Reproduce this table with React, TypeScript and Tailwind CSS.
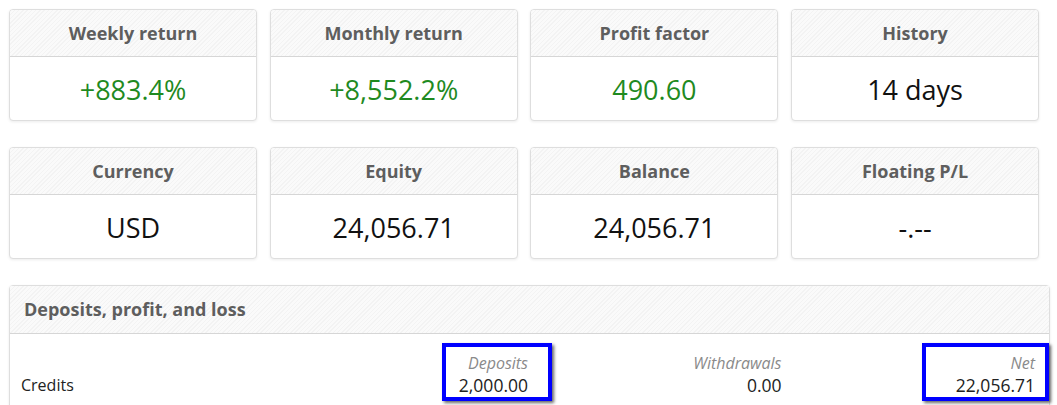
const stats = [
	[
		{ title: "Weekly return", value: "+883.4%", green: true },
		{ title: "Monthly return", value: "+8,552.2%", green: true },
		{ title: "Profit factor", value: "490.60", green: true },
		{ title: "History", value: "14 days", green: false },
	],
	[
		{ title: "Currency", value: "USD", green: false },
		{ title: "Equity", value: "24,056.71", green: false },
		{ title: "Balance", value: "24,056.71", green: false },
		{ title: "Floating P/L", value: "-.--", green: false },
	],
];

const headBg =
	"bg-[repeating-linear-gradient(135deg,#f3f3f3_0px,#f3f3f3_1px,#fafafa_1px,#fafafa_3px)]";

function StatCard({ title, value, green }: { title: string; value: string; green: boolean }) {
	return (
		<div className="w-[248px] rounded-[4px] border border-[#dedede] bg-white shadow-[0_1px_3px_rgba(0,0,0,0.08)] overflow-hidden">
			<div
				className={`h-[47px] flex items-center justify-center border-b border-[#d6d6d6] ${headBg}`}
			>
				<span className="text-[18px] font-bold text-[#5e5e5e]">{title}</span>
			</div>
			<div className="h-[63px] flex items-center justify-center pt-[3px]">
				<span
					className={`text-[27px] ${green ? "text-[#1f8a1f]" : "text-[#111]"}`}
				>
					{value}
				</span>
			</div>
		</div>
	);
}

export default function App() {
	return (
		<div
			className="w-[1057px] h-[405px] overflow-hidden bg-white pl-[9px] pt-[9px]"
			style={{ fontFamily: '"Open Sans", sans-serif' }}
		>
			<div className="flex flex-col gap-[26px]">
				{stats.map((row, i) => (
					<div key={i} className="flex gap-[12.7px]">
						{row.map((s) => (
							<StatCard key={s.title} {...s} />
						))}
					</div>
				))}

				<div className="w-[1041px] rounded-[4px] border border-[#dedede] bg-white shadow-[0_1px_3px_rgba(0,0,0,0.08)]">
					<div className={`h-[48px] flex items-center px-[14px] border-b border-[#d6d6d6] ${headBg}`}>
						<span className="text-[18px] font-bold text-[#5e5e5e]">
							Deposits, profit, and loss
						</span>
					</div>
					<div className="relative grid grid-cols-4 pl-[11px] pr-[14px] pt-[19px] pb-[20px] text-[17.5px] text-[#222]">
						<div className="flex items-end">
							<span className="text-[16px] leading-[24px]">Credits</span>
						</div>
						<div className="text-right">
							<div className="text-[16px] italic text-[#8a8a8a] leading-[20px]">Deposits</div>
							<div className="leading-[24px]">2,000.00</div>
						</div>
						<div className="text-right">
							<div className="text-[16px] italic text-[#8a8a8a] leading-[20px]">Withdrawals</div>
							<div className="leading-[24px]">0.00</div>
						</div>
						<div className="text-right">
							<div className="text-[16px] italic text-[#8a8a8a] leading-[20px]">Net</div>
							<div className="leading-[24px]">22,056.71</div>
						</div>

						<span className="absolute left-[432px] top-[9px] w-[110px] h-[58px] border-[4px] border-[#0000ff] shadow-[2px_2px_3px_rgba(0,0,0,0.6)]" />
						<span className="absolute left-[912px] top-[9px] w-[127px] h-[58px] border-[4px] border-[#0000ff] shadow-[2px_2px_3px_rgba(0,0,0,0.6)]" />
					</div>
				</div>
			</div>
		</div>
	);
}
